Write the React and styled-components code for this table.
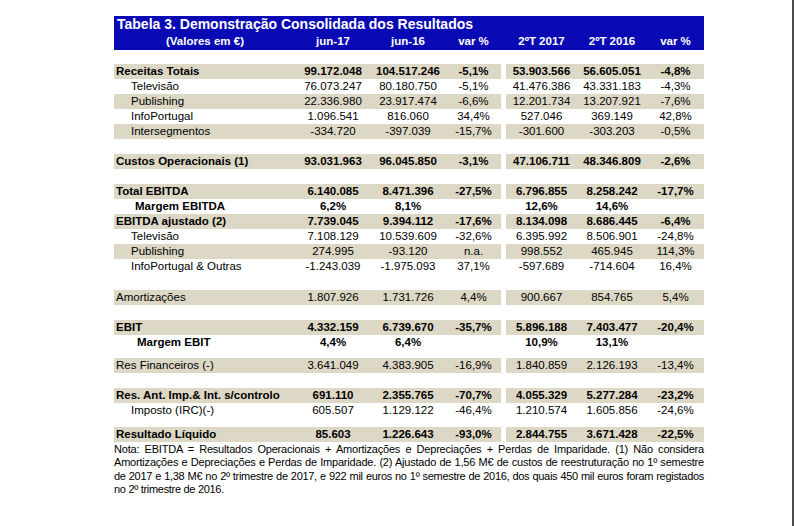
import styled, { createGlobalStyle } from "styled-components";

const GlobalStyle = createGlobalStyle`
  html, body {
    margin: 0;
    padding: 0;
    background: #fff;
  }
  body {
    font-family: "Liberation Sans", Arial, sans-serif;
    color: #000;
  }
`;

const COLS = "182px 74px 76px 55px 5px 71px 70px 57px";

const rows = [
  { label: "Receitas Totais", bold: true, band: true, v: ["99.172.048", "104.517.246", "-5,1%", "53.903.566", "56.605.051", "-4,8%"] },
  { label: "Televisão", indent: 1, v: ["76.073.247", "80.180.750", "-5,1%", "41.476.386", "43.331.183", "-4,3%"] },
  { label: "Publishing", indent: 1, band: true, v: ["22.336.980", "23.917.474", "-6,6%", "12.201.734", "13.207.921", "-7,6%"] },
  { label: "InfoPortugal", indent: 1, v: ["1.096.541", "816.060", "34,4%", "527.046", "369.149", "42,8%"] },
  { label: "Intersegmentos", indent: 1, band: true, v: ["-334.720", "-397.039", "-15,7%", "-301.600", "-303.203", "-0,5%"] },
  { gap: 15 },
  { label: "Custos Operacionais (1)", bold: true, band: true, v: ["93.031.963", "96.045.850", "-3,1%", "47.106.711", "48.346.809", "-2,6%"] },
  { gap: 15 },
  { label: "Total EBITDA", bold: true, band: true, v: ["6.140.085", "8.471.396", "-27,5%", "6.796.855", "8.258.242", "-17,7%"] },
  { label: "Margem EBITDA", bold: true, indent: 2, v: ["6,2%", "8,1%", "", "12,6%", "14,6%", ""] },
  { label: "EBITDA ajustado (2)", bold: true, band: true, v: ["7.739.045", "9.394.112", "-17,6%", "8.134.098", "8.686.445", "-6,4%"] },
  { label: "Televisão", indent: 1, v: ["7.108.129", "10.539.609", "-32,6%", "6.395.992", "8.506.901", "-24,8%"] },
  { label: "Publishing", indent: 1, band: true, v: ["274.995", "-93.120", "n.a.", "998.552", "465.945", "114,3%"] },
  { label: "InfoPortugal & Outras", indent: 1, v: ["-1.243.039", "-1.975.093", "37,1%", "-597.689", "-714.604", "16,4%"] },
  { gap: 16 },
  { label: "Amortizações", band: true, v: ["1.807.926", "1.731.726", "4,4%", "900.667", "854.765", "5,4%"] },
  { gap: 15 },
  { label: "EBIT", bold: true, band: true, v: ["4.332.159", "6.739.670", "-35,7%", "5.896.188", "7.403.477", "-20,4%"] },
  { label: "Margem EBIT", bold: true, indent: 3, v: ["4,4%", "6,4%", "", "10,9%", "13,1%", ""] },
  { gap: 8 },
  { label: "Res Financeiros (-)", band: true, v: ["3.641.049", "4.383.905", "-16,9%", "1.840.859", "2.126.193", "-13,4%"] },
  { gap: 15 },
  { label: "Res. Ant. Imp.& Int. s/controlo", bold: true, band: true, v: ["691.110", "2.355.765", "-70,7%", "4.055.329", "5.277.284", "-23,2%"] },
  { label: "Imposto (IRC)(-)", indent: 1, v: ["605.507", "1.129.122", "-46,4%", "1.210.574", "1.605.856", "-24,6%"] },
  { gap: 9 },
  { label: "Resultado Líquido", bold: true, band: true, v: ["85.603", "1.226.643", "-93,0%", "2.844.755", "3.671.428", "-22,5%"] },
];

const noteLines = [
  "Nota: EBITDA = Resultados Operacionais + Amortizações e Depreciações + Perdas de Imparidade. (1) Não considera",
  "Amortizações e Depreciações e Perdas de Imparidade. (2) Ajustado de 1,56 M€ de custos de reestruturação no 1º semestre",
  "de 2017 e 1,38 M€ no 2º trimestre de 2017, e 922 mil euros no 1º semestre de 2016, dos quais 450 mil euros foram registados",
  "no 2º trimestre de 2016.",
];

export default function App() {
  return (
    <Page>
      <GlobalStyle />
      <Report>
        <Header>
          <Title>Tabela 3. Demonstração Consolidada dos Resultados</Title>
          <HeadRow>
            <HeadCell>(Valores em €)</HeadCell>
            <HeadCell>jun-17</HeadCell>
            <HeadCell>jun-16</HeadCell>
            <HeadCell>var %</HeadCell>
            <span />
            <HeadCell>2ºT 2017</HeadCell>
            <HeadCell>2ºT 2016</HeadCell>
            <HeadCell>var %</HeadCell>
          </HeadRow>
        </Header>
        <Spacer $h={14} />
        {rows.map((r, i) =>
          r.gap ? (
            <Spacer key={i} $h={r.gap} />
          ) : (
            <Row key={i} $bold={r.bold}>
              <Label $band={r.band} $indent={r.indent || 0}>
                {r.label}
              </Label>
              {r.v.slice(0, 3).map((x, j) => (
                <Num key={j} $band={r.band}>{x}</Num>
              ))}
              <span />
              {r.v.slice(3).map((x, j) => (
                <Num key={j} $band={r.band}>{x}</Num>
              ))}
            </Row>
          )
        )}
        <Note>
          {noteLines.map((l, i) => (
            <NoteLine key={i} $last={i === noteLines.length - 1} $tight={i >= 2}>
              {l}
            </NoteLine>
          ))}
        </Note>
      </Report>
    </Page>
  );
}

const Page = styled.div`
  width: 794px;
  height: 526px;
  box-sizing: border-box;
  border-right: 2px solid #4d4d4d;
  padding: 16px 0 0 114px;
  overflow: hidden;
`;

const Report = styled.div`
  width: 590px;
  display: flex;
  flex-direction: column;
`;

const Header = styled.div`
  background: #0a0ab4;
  color: #fff;
  height: 34px;
  display: flex;
  flex-direction: column;
`;

const Title = styled.div`
  font-size: 14px;
  font-weight: bold;
  line-height: 17px;
  padding-left: 3px;
`;

const HeadRow = styled.div`
  display: grid;
  grid-template-columns: ${COLS};
  height: 17px;
  line-height: 17px;
  font-size: 11.5px;
  font-weight: bold;
`;

const HeadCell = styled.span`
  text-align: center;
  white-space: nowrap;
`;

const Spacer = styled.div`
  height: ${(p) => p.$h}px;
`;

const Row = styled.div`
  display: grid;
  grid-template-columns: ${COLS};
  height: 15px;
  line-height: 15px;
  font-size: 11.5px;
  font-weight: ${(p) => (p.$bold ? "bold" : "normal")};
`;

const Cell = styled.span`
  white-space: nowrap;
  background: ${(p) => (p.$band ? "#ddd8c5" : "transparent")};
`;

const Label = styled(Cell)`
  padding-left: ${(p) => [2, 17, 21, 23][p.$indent]}px;
`;

const Num = styled(Cell)`
  text-align: center;
`;

const Note = styled.div`
  margin-top: 1px;
  width: 590px;
  font-size: 11px;
  line-height: 13.3px;
`;

const NoteLine = styled.div`
  height: 13.3px;
  overflow: visible;
  text-align: justify;
  text-align-last: ${(p) => (p.$last ? "left" : "justify")};
  letter-spacing: ${(p) => (p.$tight ? "-0.3px" : "-0.2px")};
`;
